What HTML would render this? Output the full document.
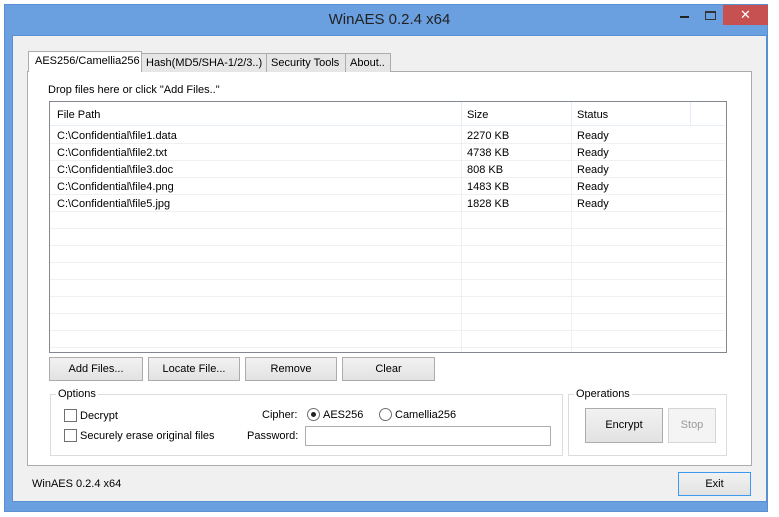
<!DOCTYPE html>
<html><head><style>
*{box-sizing:border-box;margin:0;padding:0}
body{width:779px;height:517px;background:#fff;font-family:"Liberation Sans",sans-serif;font-size:11px;color:#000;position:relative;overflow:hidden;white-space:nowrap}
.a{position:absolute}
.win{left:4px;top:4px;width:764px;height:508px;background:#6a9fe0;border:1px solid #5b8fd4}
.client{left:12px;top:35px;width:755px;height:467px;background:#f0f0f0;border:1px solid #5b8fd4}
.btn{position:absolute;background:linear-gradient(#f2f2f2,#e2e2e2);border:1px solid #acacac;text-align:center;font-size:11px}
.tab{position:absolute;top:53px;height:19px;background:#e6e6e6;border:1px solid #acacac;border-bottom:none;padding:3px 0 0 4px;font-size:11px;white-space:nowrap;overflow:hidden}
.hl{position:absolute;left:50px;width:675px;height:1px;background:#f0f0f0}
.vl{position:absolute;top:102px;width:1px;height:250px;background:#f0f0f0}
.cell{position:absolute;font-size:11px}
.grp{position:absolute;border:1px solid #dcdcdc}
.chk{position:absolute;width:13px;height:13px;border:1px solid #707070;background:#fff}
.rad{position:absolute;width:13px;height:13px;border:1px solid #707070;border-radius:50%;background:#fff}
</style></head><body>
<div class="a win"></div>
<div class="a" style="left:0;top:11px;width:779px;text-align:center;font-size:15px;color:#222">WinAES 0.2.4 x64</div>
<div class="a" style="left:680px;top:16px;width:9px;height:2px;background:#222"></div>
<div class="a" style="left:705px;top:11px;width:11px;height:9px;border:1px solid #333;border-top-width:2px"></div>
<div class="a" style="left:723px;top:5px;width:45px;height:20px;background:#c75050;color:#fff;text-align:center;font-size:13px;line-height:20px">✕</div>
<div class="a client"></div>
<div class="a" style="left:27px;top:71px;width:725px;height:395px;background:#fff;border:1px solid #acacac"></div>
<div class="tab" style="left:141px;width:126px">Hash(MD5/SHA-1/2/3..)</div>
<div class="tab" style="left:266px;width:80px">Security Tools</div>
<div class="tab" style="left:345px;width:46px">About..</div>
<div class="tab" style="left:28px;top:51px;height:21px;width:114px;background:#fff;padding:3px 0 0 6px">AES256/Camellia256</div>
<div class="a" style="left:48px;top:84px">Drop files here or click "Add Files.."</div>
<div class="a" style="left:49px;top:101px;width:678px;height:252px;border:1px solid #828790;background:#fff"></div>
<div class="a" style="left:50px;top:125px;width:675px;height:1px;background:#e5eef8"></div>
<div class="hl" style="top:143px"></div><div class="hl" style="top:160px"></div><div class="hl" style="top:177px"></div><div class="hl" style="top:194px"></div><div class="hl" style="top:211px"></div><div class="hl" style="top:228px"></div><div class="hl" style="top:245px"></div><div class="hl" style="top:262px"></div><div class="hl" style="top:279px"></div><div class="hl" style="top:296px"></div><div class="hl" style="top:313px"></div><div class="hl" style="top:330px"></div><div class="hl" style="top:347px"></div>
<div class="vl" style="left:461px"></div><div class="vl" style="left:571px"></div><div class="vl" style="left:690px;height:24px;background:#e5eef8"></div>
<div class="a" style="left:461px;top:102px;width:1px;height:24px;background:#e5eef8"></div><div class="a" style="left:571px;top:102px;width:1px;height:24px;background:#e5eef8"></div>
<div class="cell" style="left:57px;top:109px">File Path</div><div class="cell" style="left:467px;top:109px">Size</div><div class="cell" style="left:577px;top:109px">Status</div>
<div class="cell" style="left:57px;top:130px">C:\Confidential\file1.data</div><div class="cell" style="left:467px;top:130px">2270 KB</div><div class="cell" style="left:577px;top:130px">Ready</div>
<div class="cell" style="left:57px;top:147px">C:\Confidential\file2.txt</div><div class="cell" style="left:467px;top:147px">4738 KB</div><div class="cell" style="left:577px;top:147px">Ready</div>
<div class="cell" style="left:57px;top:164px">C:\Confidential\file3.doc</div><div class="cell" style="left:467px;top:164px">808 KB</div><div class="cell" style="left:577px;top:164px">Ready</div>
<div class="cell" style="left:57px;top:181px">C:\Confidential\file4.png</div><div class="cell" style="left:467px;top:181px">1483 KB</div><div class="cell" style="left:577px;top:181px">Ready</div>
<div class="cell" style="left:57px;top:198px">C:\Confidential\file5.jpg</div><div class="cell" style="left:467px;top:198px">1828 KB</div><div class="cell" style="left:577px;top:198px">Ready</div>
<div class="btn" style="left:49px;top:357px;width:94px;height:24px;line-height:22px">Add Files...</div>
<div class="btn" style="left:148px;top:357px;width:92px;height:24px;line-height:22px">Locate File...</div>
<div class="btn" style="left:245px;top:357px;width:92px;height:24px;line-height:22px">Remove</div>
<div class="btn" style="left:342px;top:357px;width:93px;height:24px;line-height:22px">Clear</div>
<div class="grp" style="left:50px;top:394px;width:513px;height:62px"></div>
<div class="a" style="left:56px;top:388px;background:#fff;padding:0 2px">Options</div>
<div class="chk" style="left:64px;top:409px"></div><div class="a" style="left:80px;top:410px">Decrypt</div>
<div class="chk" style="left:64px;top:429px"></div><div class="a" style="left:80px;top:430px">Securely erase original files</div>
<div class="a" style="left:262px;top:409px">Cipher:</div>
<div class="rad" style="left:307px;top:408px"><div class="a" style="left:3px;top:3px;width:5px;height:5px;border-radius:50%;background:#222"></div></div>
<div class="a" style="left:323px;top:409px">AES256</div>
<div class="rad" style="left:379px;top:408px"></div><div class="a" style="left:395px;top:409px">Camellia256</div>
<div class="a" style="left:247px;top:430px">Password:</div>
<div class="a" style="left:305px;top:426px;width:246px;height:20px;border:1px solid #abadb3;background:#fff"></div>
<div class="grp" style="left:568px;top:394px;width:159px;height:62px"></div>
<div class="a" style="left:574px;top:388px;background:#fff;padding:0 2px">Operations</div>
<div class="btn" style="left:585px;top:408px;width:78px;height:35px;line-height:33px">Encrypt</div>
<div class="btn" style="left:668px;top:408px;width:48px;height:35px;line-height:33px;color:#999;background:#f4f4f4;border-color:#d5d5d5">Stop</div>
<div class="a" style="left:32px;top:478px">WinAES 0.2.4 x64</div>
<div class="btn" style="left:678px;top:472px;width:73px;height:24px;line-height:22px;border-color:#3c9af0">Exit</div>
</body></html>
